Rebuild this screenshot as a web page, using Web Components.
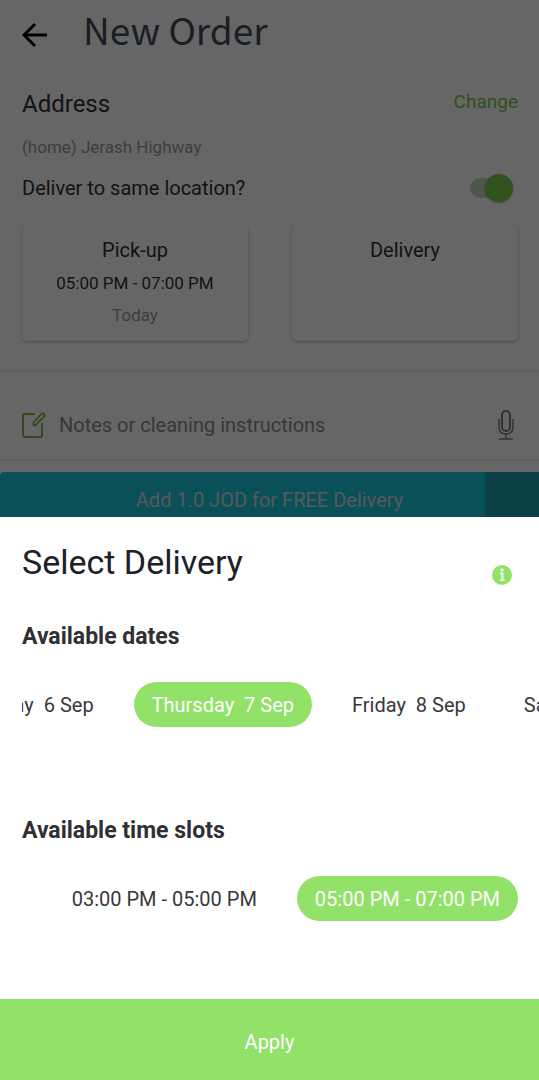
<!DOCTYPE html>
<html lang="en">
<head>
<meta charset="utf-8">
<meta name="viewport" content="width=device-width, initial-scale=1">
<title>New Order</title>
<style>
  body { margin: 0; font-family: Roboto, "Liberation Sans", sans-serif; color: #303034; background: #fff; }
</style>
</head>
<body>
<laundry-app></laundry-app>

<script>
const define = (name, html, setup) => {
  const template = document.createElement('template');
  template.innerHTML = html;
  customElements.define(name, class extends HTMLElement {
    constructor() {
      super();
      this.attachShadow({ mode: 'open' }).append(template.content.cloneNode(true));
    }
    connectedCallback() { if (setup) setup(this, this.shadowRoot); }
  });
};

define('app-header', `
  <style>
    :host { display: flex; align-items: flex-start; gap: 35px; height: 64px; padding: 0 22px; }
    button { display: flex; border: 0; padding: 0; background: none; color: #000; margin-top: 22px; }
    h1 { margin: 0; font: 400 37px/58px "Noto Sans CJK SC", "Noto Sans", sans-serif; color: #3f4f5a; }
  </style>
  <button aria-label="Back"><svg width="26" height="26" viewBox="0 0 26 26" fill="none" stroke="currentColor" stroke-width="3"><path d="M25 13H2M13 2L2 13l11 11"/></svg></button>
  <h1><slot></slot></h1>`);

define('address-section', `
  <style>
    :host { display: block; padding: 24px 21px 0 22px; }
    .row { display: flex; align-items: center; justify-content: space-between; }
    h2 { margin: 0; font-size: 24px; line-height: 32px; font-weight: 400; }
    a { font-size: 19px; line-height: 26px; color: #7ac84e; text-decoration: none; margin-bottom: 4px; }
    p { margin: 16px 0 0; font-size: 17px; line-height: 22px; color: #9a9a9a; }
    .same { margin-top: 13px; height: 34px; }
    label { font-size: 20px; line-height: 28px; }
    input { appearance: none; position: relative; width: 43px; height: 20px; margin: 0 5px 0 0; border-radius: 10px; background: #c4ddb7; }
    input::after { content: ""; position: absolute; right: 0; top: -4px; width: 28px; height: 28px; border-radius: 50%; background: #7ccb4d; box-shadow: 0 1px 2px #0005; }
  </style>
  <div class="row"><h2>Address</h2><a href="#address">Change</a></div>
  <p><slot></slot></p>
  <div class="row same"><label for="same">Deliver to same location?</label><input id="same" type="checkbox" role="switch" checked></div>`);

define('slot-card', `
  <style>
    :host { display: block; flex: 1; min-height: 116px; box-sizing: border-box; padding: 12px 8px 8px; border-radius: 5px; text-align: center; background: #fff; box-shadow: 0 1px 3px #0004; }
    h3 { margin: 0; font-size: 20px; line-height: 26px; font-weight: 400; }
    ::slotted(*) { display: block; font-size: 17px; line-height: 24px; margin-top: 8px; }
    ::slotted(.day) { color: #979ba3; }
  </style>
  <h3></h3><slot></slot>`,
  (el, root) => { root.querySelector('h3').textContent = el.getAttribute('heading'); });

define('notes-field', `
  <style>
    :host { display: flex; align-items: center; margin-top: 30px; height: 89px; padding: 18px 22px 0; box-sizing: border-box; border-top: 1px solid #e6eaeb; border-bottom: 1px solid #e6eaeb; box-shadow: 0 0 2px #0002; }
    svg { flex: none; display: block; }
    input { flex: 1; min-width: 0; height: 40px; margin: 0 12px 0 13px; padding: 0; border: 0; background: none; font: 20px Roboto, sans-serif; color: #303034; }
    input::placeholder { color: #8d8d90; opacity: 1; }
    button { border: 0; padding: 0; background: none; color: #7b7e86; margin-right: 2px; }
  </style>
  <svg width="24" height="28" viewBox="0 0 24 28" fill="none" stroke="#7eb843" stroke-width="2"><path d="M13 3H3Q1 3 1 5v19q0 2 2 2h15q2 0 2-2V12"/><path d="M11.5 14.5v-3l8-8.5q1.500-1 2.500 0t0 2.700l-8 8z" stroke-width="1.800" stroke-linejoin="round"/></svg>
  <input type="text" aria-label="Notes" placeholder="Notes or cleaning instructions">
  <button aria-label="Record a note"><svg width="18" height="32" viewBox="0 0 18 32" fill="none" stroke="currentColor" stroke-width="2"><rect x="5" y="2" width="8" height="20" rx="4"/><path d="M2 10v8q0 7 7 7t7-7v-8M9 25v5M2 30h14" stroke-width="1.5"/></svg></button>`);

define('free-delivery-bar', `
  <style>
    :host { display: block; margin-top: 12px; border-radius: 4px 0 0; height: 56px; line-height: 56px; font-size: 20px; text-align: center; color: #d8dfe2; background: linear-gradient(to right, #1bc8dd 90%, #1da1ac 90%); }
  </style><slot></slot>`);

define('order-screen', `
  <style>
    :host { display: block; flex: 1 0 0; position: relative; overflow: hidden; background: #fff; }
    .cards { display: flex; gap: 44px; padding: 20px 21px 0 22px; }
    .scrim { position: absolute; inset: 0; background: rgb(0 0 0 / 60%); pointer-events: none; }
  </style>
  <app-header>New Order</app-header>
  <address-section>(home) Jerash Highway</address-section>
  <div class="cards">
    <slot-card heading="Pick-up"><span>05:00 PM - 07:00 PM</span><span class="day">Today</span></slot-card>
    <slot-card heading="Delivery"></slot-card>
  </div>
  <notes-field></notes-field>
  <free-delivery-bar>Add 1.0 JOD for FREE Delivery</free-delivery-bar>
  <div class="scrim"></div>`);

define('choice-chip', `
  <style>
    :host { display: block; flex: none; }
    button { height: 45px; padding: 1px 18px 0; border: 0; border-radius: 23px; background: none; color: #38383a; font: 20px Roboto, sans-serif; white-space: pre; }
    :host([selected]) button { background: #92e26a; color: #fff; }
  </style>
  <button type="button"><slot></slot></button>`,
  (el, root) => root.querySelector('button').setAttribute('aria-pressed', el.hasAttribute('selected')));

define('chip-group', `
  <style>
    :host { display: block; }
    h3 { margin: 0 22px; font-size: 23px; line-height: 32px; font-weight: 700; }
    .strip { display: flex; gap: 22px; margin: 29px 0 0 22px; overflow: hidden; }
    :host([packed]) .strip { justify-content: flex-end; margin-right: 21px; }
  </style>
  <h3></h3><div class="strip"><slot></slot></div>`,
  (el, root) => {
    root.querySelector('h3').textContent = el.getAttribute('heading');
    const strip = root.querySelector('.strip');
    // Bring the chosen chip near the start, leaving the end of the one before it in view.
    requestAnimationFrame(() => {
      const chosen = el.querySelector('[selected]');
      strip.scrollLeft += chosen.getBoundingClientRect().left - strip.getBoundingClientRect().left - 112;
    });
  });

define('delivery-sheet', `
  <style>
    :host { display: block; flex: none; background: #fff; }
    header { display: flex; align-items: flex-start; justify-content: space-between; padding: 23px 27px 0 22px; }
    h2 { margin: 0; font-size: 34px; line-height: 44px; font-weight: 400; color: #202027; }
    .info { display: flex; margin-top: 25px; padding: 0; border: 0; background: none; }
    .dates { margin-top: 36px; }
    .times { margin-top: 88px; }
    .apply { display: block; width: 100%; height: 81px; margin-top: 78px; padding: 4px 0 0; border: 0; background: #92e26a; color: #fff; font: 20px Roboto, sans-serif; }
  </style>
  <header>
    <h2>Select Delivery</h2>
    <button class="info" aria-label="About delivery"><svg width="20" height="20" viewBox="0 0 20 20"><circle cx="10" cy="10" r="10" fill="#92e26a"/><path d="M8 8.500h2.500v6.500M8 15.200h4.500" fill="none" stroke="#f4fcf0" stroke-width="1.800"/><circle cx="10" cy="5" r="1.700" fill="#f4fcf0"/></svg></button>
  </header>
  <chip-group class="dates" heading="Available dates">
    <choice-chip>Wednesday  6 Sep</choice-chip>
    <choice-chip selected>Thursday  7 Sep</choice-chip>
    <choice-chip>Friday  8 Sep</choice-chip>
    <choice-chip>Saturday  9 Sep</choice-chip>
  </chip-group>
  <chip-group class="times" heading="Available time slots" packed>
    <choice-chip>03:00 PM - 05:00 PM</choice-chip>
    <choice-chip selected>05:00 PM - 07:00 PM</choice-chip>
  </chip-group>
  <button class="apply" type="button">Apply</button>`);

define('laundry-app', `
  <style>
    :host { display: flex; flex-direction: column; min-height: 100vh; }
  </style>
  <order-screen></order-screen>
  <delivery-sheet></delivery-sheet>`);
</script>
</body>
</html>
